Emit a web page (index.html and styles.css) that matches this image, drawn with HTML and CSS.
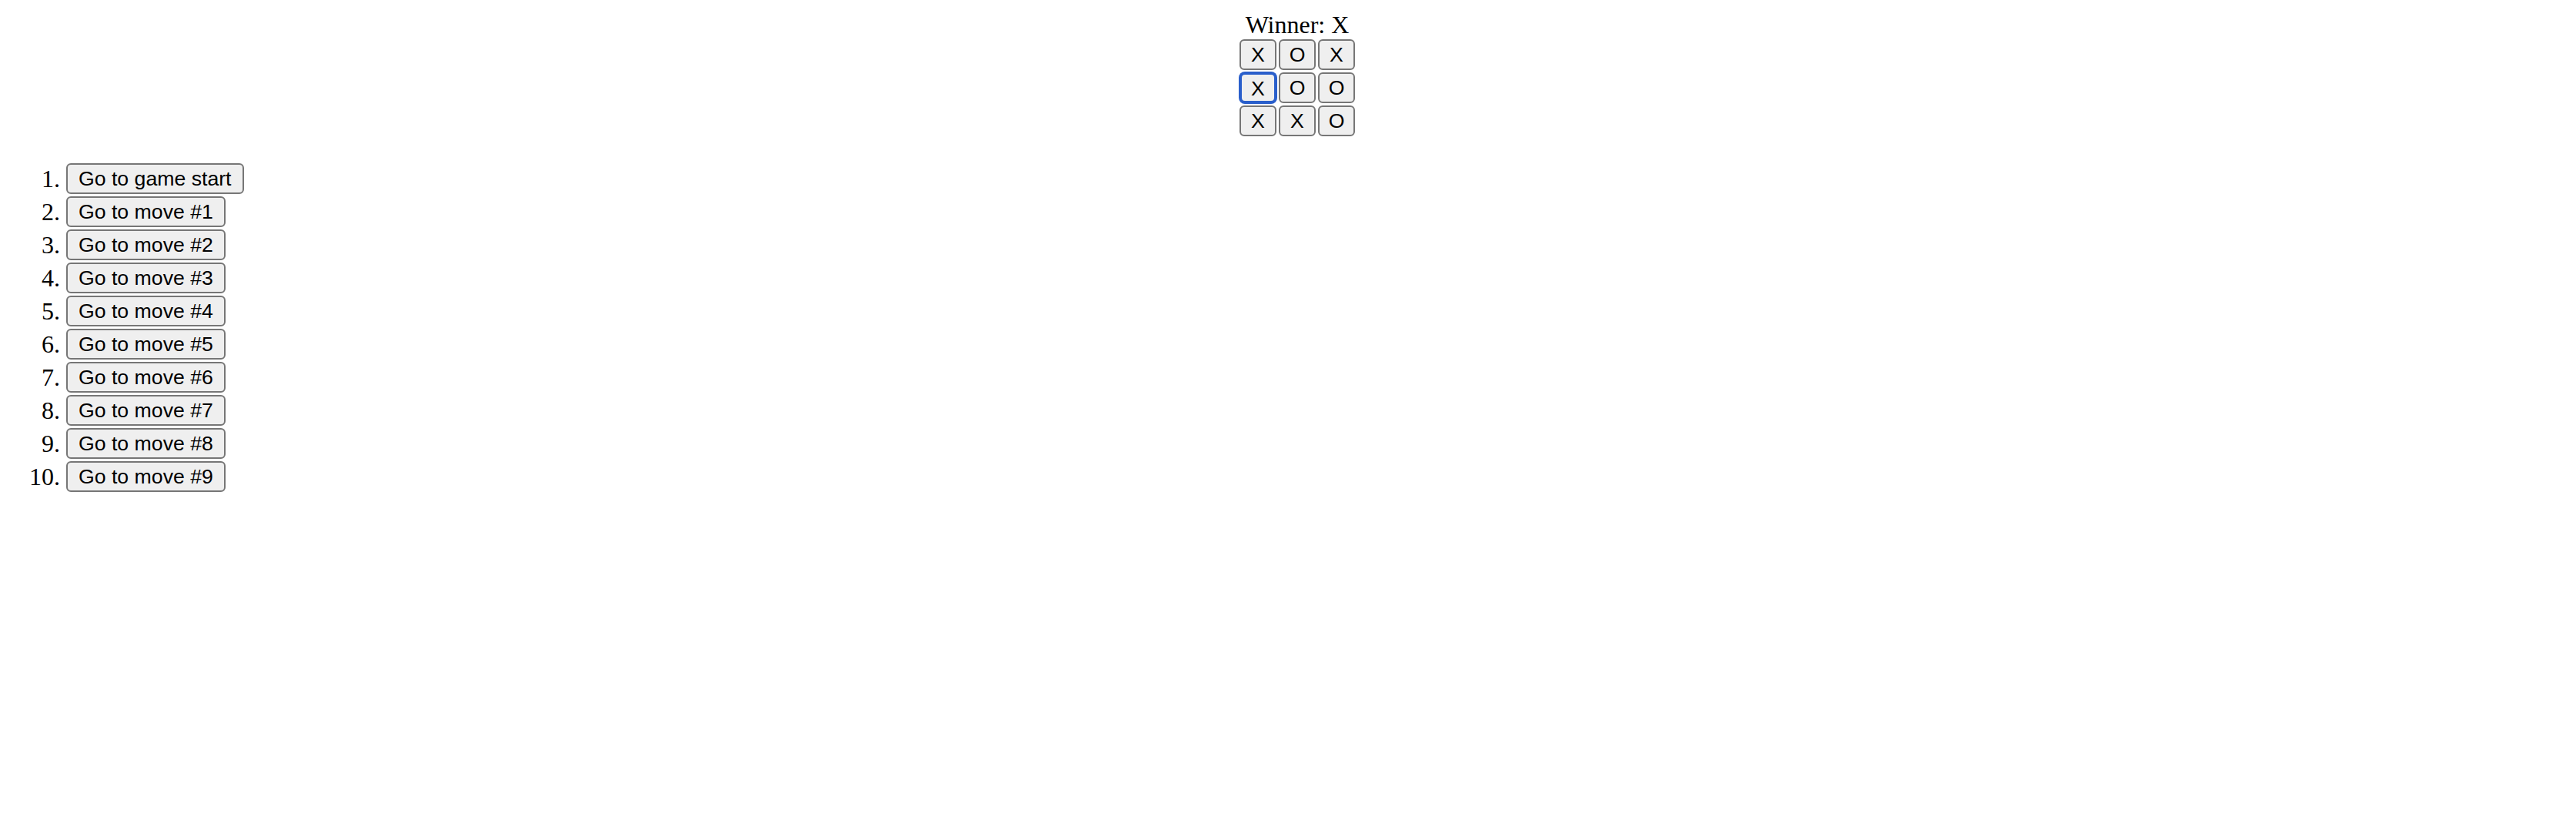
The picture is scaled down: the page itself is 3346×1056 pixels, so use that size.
FILE: index.html
```html
<!DOCTYPE html>
<html>
<head>
<meta charset="utf-8">
<link rel="stylesheet" href="styles.css">
</head>
<body>
<main class="game">
  <div class="game-board">
    <div class="status">Winner: X</div>
    <div class="board">
      <div class="board-row">
        <button class="square">X</button>
        <button class="square">O</button>
        <button class="square">X</button>
      </div>
      <div class="board-row">
        <button class="square focused">X</button>
        <button class="square">O</button>
        <button class="square">O</button>
      </div>
      <div class="board-row">
        <button class="square">X</button>
        <button class="square">X</button>
        <button class="square">O</button>
      </div>
    </div>
  </div>
  <ol class="moves">
    <li><button class="move">Go to game start</button></li>
    <li><button class="move">Go to move #1</button></li>
    <li><button class="move">Go to move #2</button></li>
    <li><button class="move">Go to move #3</button></li>
    <li><button class="move">Go to move #4</button></li>
    <li><button class="move">Go to move #5</button></li>
    <li><button class="move">Go to move #6</button></li>
    <li><button class="move">Go to move #7</button></li>
    <li><button class="move">Go to move #8</button></li>
    <li><button class="move">Go to move #9</button></li>
  </ol>
</main>
</body>
</html>
```

FILE: styles.css
```css
html, body {
  margin: 0;
  padding: 0;
  background: #ffffff;
}

body {
  font-family: "Liberation Serif", "Times New Roman", serif;
  font-size: 32px;
  color: #000000;
}

.game {
  padding-top: 13px;
}

.game-board {
  display: flex;
  flex-direction: column;
  align-items: center;
  padding-left: 24px;
}

.status {
  line-height: 38px;
  height: 38px;
}

.board {
  display: flex;
  flex-direction: column;
  gap: 3px;
}

.board-row {
  display: flex;
  gap: 3px;
}

.square {
  box-sizing: border-box;
  width: 48px;
  height: 40px;
  padding: 0;
  margin: 0;
  background: #efefef;
  border: 2px solid #767676;
  border-radius: 6px;
  font-family: "Liberation Sans", Arial, sans-serif;
  font-size: 26.67px;
  line-height: 36px;
  color: #000000;
  text-align: center;
}

.square.focused {
  border: 3px solid #2a5fcb;
  box-shadow: 0 0 0 1px #2a5fcb;
  border-radius: 7px;
}

.moves {
  margin: 35px 0 0 0;
  padding-left: 86px;
}

.moves li {
  line-height: 40px;
  height: 40px;
  margin-bottom: 3px;
}

.move {
  box-sizing: border-box;
  height: 40px;
  margin: 0;
  padding: 0 14px;
  vertical-align: top;
  background: #efefef;
  border: 2px solid #767676;
  border-radius: 6px;
  font-family: "Liberation Sans", Arial, sans-serif;
  font-size: 26.67px;
  line-height: 36px;
  color: #000000;
}
```
